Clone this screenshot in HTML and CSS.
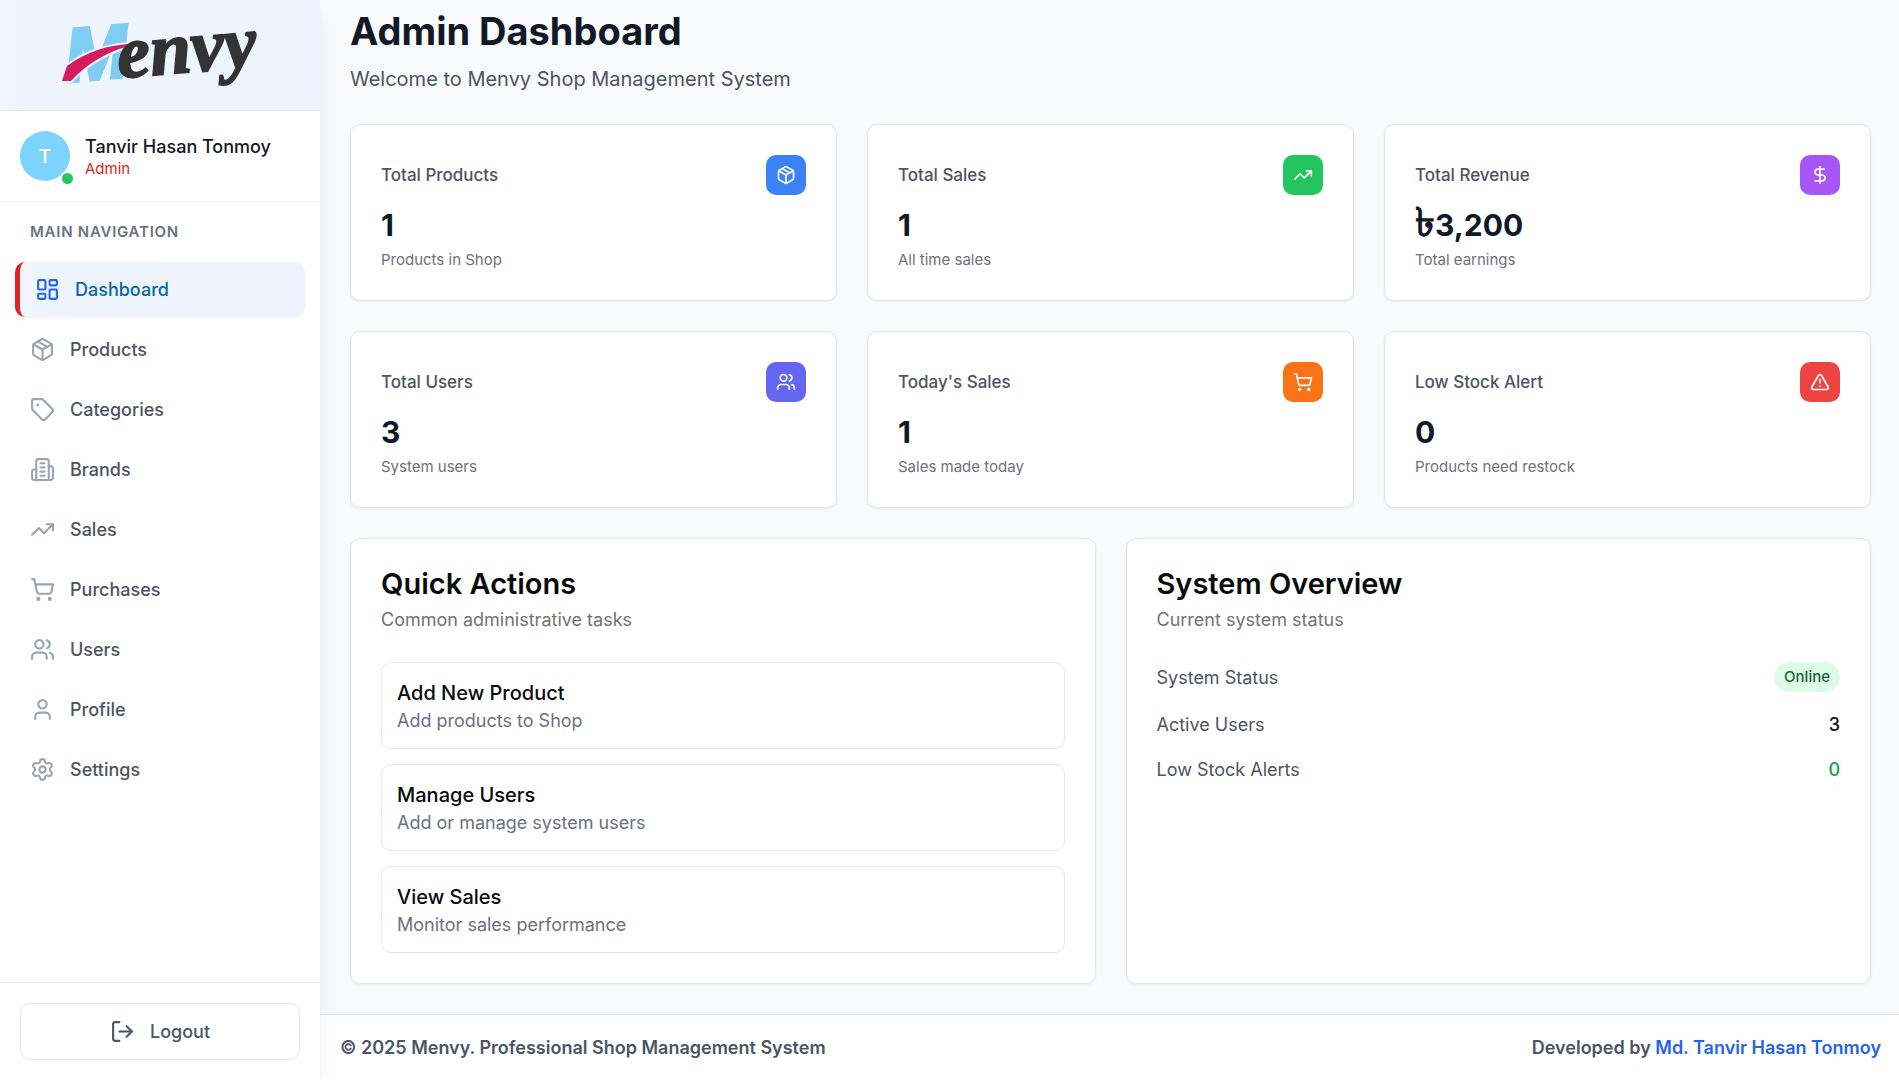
FILE: index.html
```html
<!DOCTYPE html>
<html lang="en">
<head>
<meta charset="utf-8">
<meta name="viewport" content="width=device-width, initial-scale=1">
<title>Menvy - Admin Dashboard</title>
<link rel="stylesheet" href="styles.css">
</head>
<body>
<svg class="sprite" aria-hidden="true">
  <symbol id="i-dashboard" viewBox="0 0 24 24"><rect width="7" height="9" x="3" y="3" rx="1"/><rect width="7" height="5" x="14" y="3" rx="1"/><rect width="7" height="9" x="14" y="12" rx="1"/><rect width="7" height="5" x="3" y="16" rx="1"/></symbol>
  <symbol id="i-package" viewBox="0 0 24 24"><path d="M11 21.73a2 2 0 0 0 2 0l7-4A2 2 0 0 0 21 16V8a2 2 0 0 0-1-1.73l-7-4a2 2 0 0 0-2 0l-7 4A2 2 0 0 0 3 8v8a2 2 0 0 0 1 1.73z"/><path d="M12 22V12"/><path d="m3.29 7 8.71 5 8.71-5"/><path d="m7.5 4.27 9 5.15"/></symbol>
  <symbol id="i-tag" viewBox="0 0 24 24"><path d="M12.586 2.586A2 2 0 0 0 11.172 2H4a2 2 0 0 0-2 2v7.172a2 2 0 0 0 .586 1.414l8.704 8.704a2.426 2.426 0 0 0 3.42 0l6.58-6.58a2.426 2.426 0 0 0 0-3.42z"/><circle cx="7.5" cy="7.5" r=".5" fill="currentColor"/></symbol>
  <symbol id="i-building" viewBox="0 0 24 24"><path d="M6 22V4a2 2 0 0 1 2-2h8a2 2 0 0 1 2 2v18Z"/><path d="M6 12H4a2 2 0 0 0-2 2v6a2 2 0 0 0 2 2h2"/><path d="M18 9h2a2 2 0 0 1 2 2v9a2 2 0 0 1-2 2h-2"/><path d="M10 6h4M10 10h4M10 14h4M10 18h4"/></symbol>
  <symbol id="i-trend" viewBox="0 0 24 24"><path d="M16 7h6v6"/><path d="m22 7-8.5 8.5-5-5L2 17"/></symbol>
  <symbol id="i-cart" viewBox="0 0 24 24"><circle cx="8" cy="21" r="1"/><circle cx="19" cy="21" r="1"/><path d="M2.05 2.05h2l2.66 12.42a2 2 0 0 0 2 1.58h9.78a2 2 0 0 0 1.95-1.57l1.65-7.43H5.12"/></symbol>
  <symbol id="i-users" viewBox="0 0 24 24"><path d="M16 21v-2a4 4 0 0 0-4-4H6a4 4 0 0 0-4 4v2"/><circle cx="9" cy="7" r="4"/><path d="M22 21v-2a4 4 0 0 0-3-3.87"/><path d="M16 3.13a4 4 0 0 1 0 7.75"/></symbol>
  <symbol id="i-user" viewBox="0 0 24 24"><path d="M19 21v-2a4 4 0 0 0-4-4H9a4 4 0 0 0-4 4v2"/><circle cx="12" cy="7" r="4"/></symbol>
  <symbol id="i-settings" viewBox="0 0 24 24"><path d="M9.671 4.136a2.34 2.34 0 0 1 4.659 0 2.34 2.34 0 0 0 3.319 1.915 2.34 2.34 0 0 1 2.33 4.033 2.34 2.34 0 0 0 0 3.831 2.34 2.34 0 0 1-2.33 4.033 2.34 2.34 0 0 0-3.319 1.915 2.34 2.34 0 0 1-4.659 0 2.34 2.34 0 0 0-3.32-1.915 2.34 2.34 0 0 1-2.33-4.033 2.34 2.34 0 0 0 0-3.831A2.34 2.34 0 0 1 6.35 6.051a2.34 2.34 0 0 0 3.319-1.915"/><circle cx="12" cy="12" r="3"/></symbol>
  <symbol id="i-dollar" viewBox="0 0 24 24"><path d="M12 2v20"/><path d="M17 5H9.5a3.5 3.5 0 0 0 0 7h5a3.5 3.5 0 0 1 0 7H6"/></symbol>
  <symbol id="i-alert" viewBox="0 0 24 24"><path d="m21.73 18-8-14a2 2 0 0 0-3.48 0l-8 14A2 2 0 0 0 4 21h16a2 2 0 0 0 1.73-3"/><path d="M12 9v4"/><path d="M12 17h.01"/></symbol>
  <symbol id="i-logout" viewBox="0 0 24 24"><path d="M9 3H5a2 2 0 0 0-2 2v14a2 2 0 0 0 2 2h4"/><path d="m16 17 5-5-5-5"/><path d="M21 12H9"/></symbol>
</svg>

<div class="app">
  <aside class="sidebar">
    <header class="brand">
      <svg class="logo" viewBox="0 0 200 70" role="img" aria-label="Menvy">
        <text class="logo-m" transform="translate(7 62) rotate(-5)">M</text>
        <path class="swoosh" d="M2 61 L7 46 C26 32 48 24 76 24 C52 30 30 40 11 61 Z"/>
        <text class="logo-envy" transform="translate(59 58) rotate(-5)">envy</text>
      </svg>
    </header>

    <section class="profile">
      <div class="avatar">T<span class="online-dot"></span></div>
      <div>
        <p class="profile-name">Tanvir Hasan Tonmoy</p>
        <p class="profile-role">Admin</p>
      </div>
    </section>

    <nav class="nav">
      <h2 class="nav-heading">Main Navigation</h2>
      <ul class="nav-list">
        <li><a class="nav-link active" href="#"><svg class="icon"><use href="#i-dashboard"/></svg>Dashboard</a></li>
        <li><a class="nav-link" href="#"><svg class="icon"><use href="#i-package"/></svg>Products</a></li>
        <li><a class="nav-link" href="#"><svg class="icon"><use href="#i-tag"/></svg>Categories</a></li>
        <li><a class="nav-link" href="#"><svg class="icon"><use href="#i-building"/></svg>Brands</a></li>
        <li><a class="nav-link" href="#"><svg class="icon"><use href="#i-trend"/></svg>Sales</a></li>
        <li><a class="nav-link" href="#"><svg class="icon"><use href="#i-cart"/></svg>Purchases</a></li>
        <li><a class="nav-link" href="#"><svg class="icon"><use href="#i-users"/></svg>Users</a></li>
        <li><a class="nav-link" href="#"><svg class="icon"><use href="#i-user"/></svg>Profile</a></li>
        <li><a class="nav-link" href="#"><svg class="icon"><use href="#i-settings"/></svg>Settings</a></li>
      </ul>
    </nav>

    <div class="sidebar-foot">
      <button class="logout" type="button"><svg class="icon"><use href="#i-logout"/></svg>Logout</button>
    </div>
  </aside>

  <div class="page">
    <main class="main">
      <header>
        <h1 class="title">Admin Dashboard</h1>
        <p class="subtitle">Welcome to Menvy Shop Management System</p>
      </header>

      <section class="stats">
        <article class="card stat">
          <div class="stat-head"><h3 class="stat-title">Total Products</h3><span class="stat-icon blue"><svg class="icon"><use href="#i-package"/></svg></span></div>
          <p class="stat-value">1</p>
          <p class="stat-note">Products in Shop</p>
        </article>
        <article class="card stat">
          <div class="stat-head"><h3 class="stat-title">Total Sales</h3><span class="stat-icon green"><svg class="icon"><use href="#i-trend"/></svg></span></div>
          <p class="stat-value">1</p>
          <p class="stat-note">All time sales</p>
        </article>
        <article class="card stat">
          <div class="stat-head"><h3 class="stat-title">Total Revenue</h3><span class="stat-icon purple"><svg class="icon"><use href="#i-dollar"/></svg></span></div>
          <p class="stat-value"><span class="currency">৳</span>3,200</p>
          <p class="stat-note">Total earnings</p>
        </article>
        <article class="card stat">
          <div class="stat-head"><h3 class="stat-title">Total Users</h3><span class="stat-icon indigo"><svg class="icon"><use href="#i-users"/></svg></span></div>
          <p class="stat-value">3</p>
          <p class="stat-note">System users</p>
        </article>
        <article class="card stat">
          <div class="stat-head"><h3 class="stat-title">Today's Sales</h3><span class="stat-icon orange"><svg class="icon"><use href="#i-cart"/></svg></span></div>
          <p class="stat-value">1</p>
          <p class="stat-note">Sales made today</p>
        </article>
        <article class="card stat">
          <div class="stat-head"><h3 class="stat-title">Low Stock Alert</h3><span class="stat-icon red"><svg class="icon"><use href="#i-alert"/></svg></span></div>
          <p class="stat-value">0</p>
          <p class="stat-note">Products need restock</p>
        </article>
      </section>

      <section class="panels">
        <article class="card">
          <h3 class="panel-title">Quick Actions</h3>
          <p class="panel-note">Common administrative tasks</p>
          <div class="actions">
            <a class="action" href="#"><span class="action-title">Add New Product</span><span class="action-note">Add products to Shop</span></a>
            <a class="action" href="#"><span class="action-title">Manage Users</span><span class="action-note">Add or manage system users</span></a>
            <a class="action" href="#"><span class="action-title">View Sales</span><span class="action-note">Monitor sales performance</span></a>
          </div>
        </article>
        <article class="card">
          <h3 class="panel-title">System Overview</h3>
          <p class="panel-note">Current system status</p>
          <dl class="overview">
            <div class="overview-row"><dt>System Status</dt><dd class="badge">Online</dd></div>
            <div class="overview-row"><dt>Active Users</dt><dd>3</dd></div>
            <div class="overview-row"><dt>Low Stock Alerts</dt><dd class="ok">0</dd></div>
          </dl>
        </article>
      </section>
    </main>

    <footer class="footer">
      <p>© 2025 Menvy. Professional Shop Management System</p>
      <p>Developed by <a href="#">Md. Tanvir Hasan Tonmoy</a></p>
    </footer>
  </div>
</div>
</body>
</html>
```
FILE: styles.css
```css
* { box-sizing: border-box; }

body, h1, h2, h3, p, ul, dl, dd { margin: 0; }

body {
  background: #f9fafb;
  color: #0a0a0a;
  font-family: Inter, "Noto Sans", sans-serif;
  font-size: 18px;
  line-height: 25px;
}

a { color: inherit; text-decoration: none; }

.sprite { position: absolute; width: 0; height: 0; }

.icon {
  flex: none;
  width: 25px;
  height: 25px;
  fill: none;
  stroke: currentColor;
  stroke-width: 2;
  stroke-linecap: round;
  stroke-linejoin: round;
}

.app { display: flex; min-height: 100vh; }

/* Sidebar */
.sidebar {
  position: relative;
  display: flex;
  flex: none;
  flex-direction: column;
  width: 320px;
  background: #fff;
  box-shadow: 0 12px 19px -4px rgb(0 0 0 / .1), 0 5px 8px -5px rgb(0 0 0 / .1);
}

.brand {
  display: flex;
  justify-content: center;
  padding: 20px;
  border-bottom: 1px solid #e5e7eb;
  background: linear-gradient(to right, #eff6ff, #eef2ff);
}

.logo { width: 200px; height: 70px; overflow: visible; }
.logo-m { font: italic bold 76px "Liberation Sans", sans-serif; fill: #7ecef4; stroke: #7ecef4; stroke-width: 3; }
.swoosh { fill: #d81b5f; stroke: #eff4ff; stroke-width: 4; paint-order: stroke; }
.logo-envy { font: italic bold 74px "Liberation Serif", serif; fill: #333; stroke: #333; stroke-width: 2; }

.profile {
  display: flex;
  align-items: center;
  gap: 15px;
  padding: 20px;
  border-bottom: 1px solid #f3f4f6;
}

.avatar {
  position: relative;
  display: grid;
  place-items: center;
  width: 50px;
  height: 50px;
  border-radius: 50%;
  background: #7dd3fc;
  color: #fff;
  font-weight: 600;
}

.online-dot {
  position: absolute;
  right: -5px;
  bottom: -5px;
  width: 15px;
  height: 15px;
  border: 2px solid #fff;
  border-radius: 50%;
  background: #22c55e;
}

.profile-name { color: #111827; font-weight: 500; }
.profile-role { color: #dc2626; font-size: 15px; line-height: 20px; }

.nav { flex: 1; padding: 20px 15px; }

.nav-heading {
  padding: 0 15px;
  margin-bottom: 20px;
  color: #6b7280;
  font-size: 15px;
  font-weight: 600;
  line-height: 20px;
  letter-spacing: .05em;
  text-transform: uppercase;
}

.nav-list { display: grid; gap: 5px; padding: 0; list-style: none; }

.nav-link {
  display: flex;
  align-items: center;
  gap: 15px;
  padding: 15px;
  border-radius: 10px;
  color: #4b5563;
  font-weight: 500;
}

.nav-link .icon { color: #9ca3af; }

.nav-link.active {
  border-left: 5px solid #dc2626;
  background: linear-gradient(to right, #eff6ff, #eef2ff);
  box-shadow: 0 1px 3px rgb(0 0 0 / .05);
  color: #0369a1;
}

.nav-link.active .icon { color: #2563eb; }

.sidebar-foot { padding: 20px; border-top: 1px solid #e5e7eb; }

.logout {
  display: flex;
  align-items: center;
  justify-content: center;
  gap: 15px;
  width: 100%;
  padding: 15px;
  border: 1px solid #e5e7eb;
  border-radius: 10px;
  background: #fff;
  color: #4b5563;
  font: inherit;
  font-weight: 500;
}

/* Page */
.page { display: flex; flex: 1; flex-direction: column; min-width: 0; }

.main {
  display: flex;
  flex: 1;
  flex-direction: column;
  gap: 30px;
  padding: 9px 28px 30px 30px;
}

.title { color: #111827; font-size: 38px; font-weight: 700; line-height: 45px; }
.subtitle { margin-top: 10px; color: #4b5563; font-size: 20px; line-height: 30px; }

.stats { display: grid; grid-template-columns: repeat(3, 1fr); gap: 30px; }

.card {
  padding: 30px;
  border: 1px solid #e5e5e5;
  border-radius: 10px;
  background: #fff;
  box-shadow: 0 1px 3px rgb(0 0 0 / .06);
}

.stat-head {
  display: flex;
  align-items: center;
  justify-content: space-between;
  margin-bottom: 10px;
}

.stat-title { color: #4b5563; font-size: 17px; font-weight: 500; }

.stat-icon {
  display: grid;
  place-items: center;
  width: 40px;
  height: 40px;
  border-radius: 10px;
  color: #fff;
}

.stat-icon .icon { width: 20px; height: 20px; }

.blue { background: #3b82f6; }
.green { background: #22c55e; }
.purple { background: #a855f7; }
.indigo { background: #6366f1; }
.orange { background: #f97316; }
.red { background: #ef4444; }

.stat-value { color: #111827; font-size: 30px; font-weight: 700; line-height: 40px; }
.currency { font-size: 40px; line-height: 30px; }
.stat-note { margin-top: 5px; color: #6b7280; font-size: 15px; line-height: 20px; }

.panels { display: grid; flex: 1; grid-template-columns: repeat(2, 1fr); gap: 30px; }

.panel-title { font-size: 29px; font-weight: 600; line-height: 30px; }
.panel-note { margin-top: 8px; color: #737373; }

.actions { display: grid; gap: 15px; margin-top: 30px; }

.action {
  display: grid;
  padding: 15px;
  border: 1px solid #e5e7eb;
  border-radius: 10px;
}

.action-title { font-size: 20px; font-weight: 500; line-height: 30px; }
.action-note { color: #6b7280; }

.overview { display: grid; gap: 20px; margin-top: 30px; }
.overview-row { display: flex; align-items: center; justify-content: space-between; }
.overview dt { color: #4b5563; }
.overview dd { font-weight: 500; }

.overview .badge {
  padding: 5px 10px;
  border-radius: 15px;
  background: #dcfce7;
  color: #166534;
  font-size: 15px;
  line-height: 20px;
}

.overview .ok { color: #16a34a; }

.footer {
  display: flex;
  justify-content: space-between;
  padding: 20px 18px 20px 20px;
  border-top: 1px solid #e5e7eb;
  background: #fff;
  color: #4b5563;
  font-weight: 600;
}

.footer a { color: #2563eb; }
```
